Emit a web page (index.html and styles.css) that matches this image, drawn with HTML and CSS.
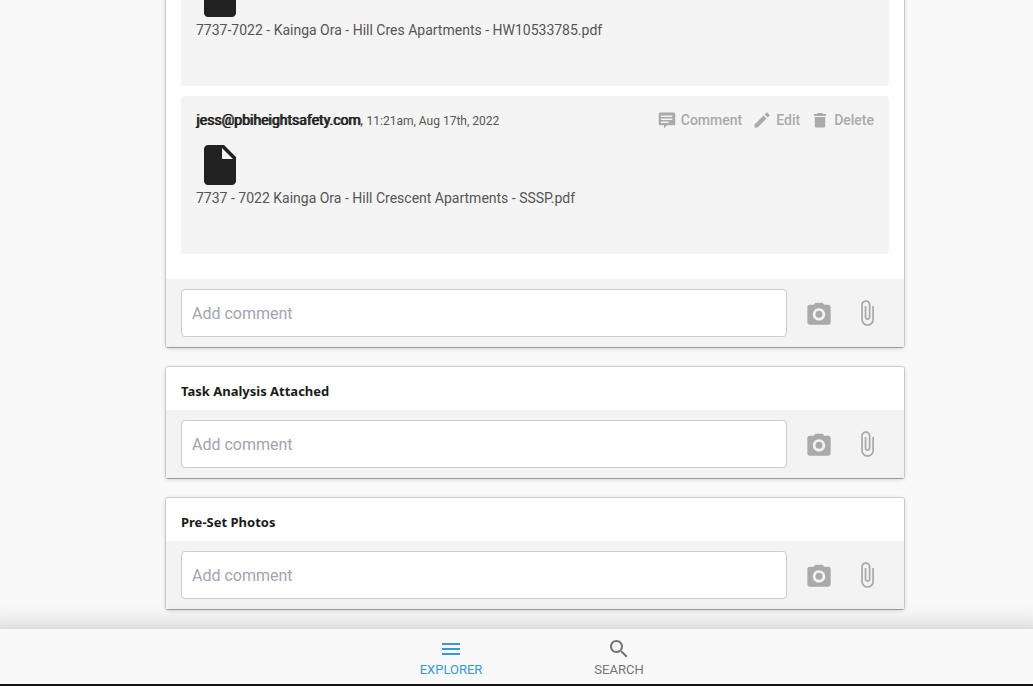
FILE: index.html
```html
<!DOCTYPE html>
<html lang="en">
<head>
<meta charset="utf-8">
<title>Explorer</title>
<link rel="stylesheet" href="styles.css">
</head>
<body>
<svg class="sprite" aria-hidden="true">
  <symbol id="file" viewBox="0 0 24 24"><path d="M6 2c-1.100 0-2 .9-2 2v16c0 1.100.9 2 2 2h12c1.100 0 2-.9 2-2V8l-6-6H6zm7 7V3.500L18.500 9H13z"/></symbol>
  <symbol id="comment" viewBox="0 0 24 24"><path d="M3 2h18a2 2 0 0 1 2 2v13a2 2 0 0 1-2 2H12l-4 4v-4H3a2 2 0 0 1-2-2V4a2 2 0 0 1 2-2zm1 4v2h15V6H4zm0 4v2h15v-2H4zm0 4v2h10v-2H4z"/></symbol>
  <symbol id="edit" viewBox="0 0 24 24"><path d="M2 18v4h4L18 10l-4-4L2 18zM21.700 6.300c.4-.4.4-1.100 0-1.500l-2.500-2.500c-.4-.4-1.100-.4-1.500 0L15.500 4.500l4 4 2.200-2.200z"/></symbol>
  <symbol id="trash" viewBox="0 0 24 24"><path d="M5 20c0 1.200.9 2 2 2h10c1.100 0 2-.8 2-2V8H5v12zM20 4h-4l-1-1.500H9L8 4H4v2.500h16V4z"/></symbol>
  <symbol id="camera" viewBox="0 0 24 24"><circle cx="12" cy="13" r="3"/><path d="M9 3.200L7.500 5H4c-1.100 0-2 .9-2 2v13c0 1.100.9 2 2 2h16c1.100 0 2-.9 2-2V7c0-1.100-.9-2-2-2h-3.500L15 3.200H9zm3 15.300c-3 0-5.300-2.400-5.300-5.300S9 7.900 12 7.900s5.300 2.400 5.300 5.300-2.300 5.300-5.300 5.300z"/></symbol>
  <symbol id="clip" viewBox="0 0 24 24"><path d="M16.500 6v11.500c0 2.210-1.790 4-4 4s-4-1.790-4-4V5c0-1.380 1.120-2.500 2.500-2.500s2.500 1.120 2.500 2.500v10.500c0 .55-.45 1-1 1s-1-.45-1-1V6H10v9.500c0 1.380 1.120 2.500 2.500 2.500s2.500-1.120 2.500-2.500V5c0-2.210-1.790-4-4-4S7 2.790 7 5v12.500c0 3.040 2.460 5.500 5.500 5.500s5.500-2.460 5.500-5.500V6h-1.500z"/></symbol>
  <symbol id="menu" viewBox="0 0 24 24"><path d="M3 18h18v-2H3v2zm0-5h18v-2H3v2zm0-7v2h18V6H3z"/></symbol>
  <symbol id="search" viewBox="0 0 24 24"><path d="M15.500 14h-.79l-.28-.27C15.410 12.590 16 11.110 16 9.500 16 5.910 13.090 3 9.500 3S3 5.910 3 9.500 5.910 16 9.500 16c1.610 0 3.090-.59 4.230-1.570l.27.28v.79l5 4.990L20.490 19l-4.990-5zm-6 0C7.010 14 5 11.990 5 9.500S7.010 5 9.500 5 14 7.010 14 9.500 11.990 14 9.500 14z"/></symbol>
</svg>

<main class="feed">
  <section class="card">
    <div class="comments">
      <article class="comment">
        <svg class="file-icon"><use href="#file"/></svg>
        <p class="file-name">7737-7022 - Kainga Ora - Hill Cres Apartments - HW10533785.pdf</p>
      </article>
      <article class="comment">
        <header class="comment-head">
          <p class="byline"><span class="author">jess@pbiheightsafety.com</span>, <time class="time">11:21am, Aug 17th, 2022</time></p>
          <div class="actions">
            <button class="action" type="button"><svg class="action-icon"><use href="#comment"/></svg>Comment</button>
            <button class="action" type="button"><svg class="action-icon"><use href="#edit"/></svg>Edit</button>
            <button class="action" type="button"><svg class="action-icon"><use href="#trash"/></svg>Delete</button>
          </div>
        </header>
        <svg class="file-icon"><use href="#file"/></svg>
        <p class="file-name">7737 - 7022 Kainga Ora - Hill Crescent Apartments - SSSP.pdf</p>
      </article>
    </div>
    <form class="add">
      <input class="add-input" type="text" placeholder="Add comment" aria-label="Add comment">
      <button class="add-button" type="button" aria-label="Add photo"><svg class="add-icon"><use href="#camera"/></svg></button>
      <button class="add-button" type="button" aria-label="Attach file"><svg class="add-icon"><use href="#clip"/></svg></button>
    </form>
  </section>

  <section class="card">
    <h2 class="card-title">Task Analysis Attached</h2>
    <form class="add">
      <input class="add-input" type="text" placeholder="Add comment" aria-label="Add comment">
      <button class="add-button" type="button" aria-label="Add photo"><svg class="add-icon"><use href="#camera"/></svg></button>
      <button class="add-button" type="button" aria-label="Attach file"><svg class="add-icon"><use href="#clip"/></svg></button>
    </form>
  </section>

  <section class="card">
    <h2 class="card-title">Pre-Set Photos</h2>
    <form class="add">
      <input class="add-input" type="text" placeholder="Add comment" aria-label="Add comment">
      <button class="add-button" type="button" aria-label="Add photo"><svg class="add-icon"><use href="#camera"/></svg></button>
      <button class="add-button" type="button" aria-label="Attach file"><svg class="add-icon"><use href="#clip"/></svg></button>
    </form>
  </section>
</main>

<nav class="tabs">
  <a class="tab tab-active" href="#explorer"><svg class="tab-icon"><use href="#menu"/></svg>EXPLORER</a>
  <a class="tab" href="#find"><svg class="tab-icon"><use href="#search"/></svg>SEARCH</a>
</nav>
</body>
</html>
```

FILE: styles.css
```css
* {
  box-sizing: border-box;
}

body {
  display: flex;
  flex-direction: column;
  height: 100vh;
  margin: 0;
  overflow: hidden;
  background: #f9f9f9;
  color: #555;
  font: 14px/18px Roboto, "Liberation Sans", sans-serif;
}

svg {
  display: block;
  fill: currentColor;
}

p,
h2 {
  margin: 0;
}

button {
  padding: 0;
  border: 0;
  background: none;
  color: #aaa;
  font: inherit;
  cursor: pointer;
}

.sprite {
  position: absolute;
  width: 0;
  height: 0;
}

.feed {
  display: flex;
  flex: 1;
  flex-direction: column;
  align-items: center;
  justify-content: flex-end;
  gap: 20px;
  min-height: 0;
  padding: 0 0 20px 37px;
  overflow: hidden;
}

.card {
  flex: none;
  width: 100%;
  max-width: 738px;
  border-radius: 2px;
  background: #fff;
  box-shadow: 0 1px 0 0 rgba(0, 0, 0, 0.2), 0 0 0 1px rgba(0, 0, 0, 0.12), 0 1px 5px rgba(0, 0, 0, 0.2);
}

.comments {
  display: flex;
  flex-direction: column;
  gap: 10px;
  padding: 15px 15px 25px;
}

.comment {
  padding: 15px 15px 47px;
  border-radius: 4px;
  background: #f4f4f4;
}

.comment-head {
  display: flex;
  justify-content: space-between;
  margin-bottom: 12px;
}

.author {
  color: #212121;
  text-shadow: 1px 0 #212121;
}

.time {
  font-size: 12px;
  line-height: 14px;
}

.actions {
  display: flex;
  gap: 11px;
}

.action {
  display: flex;
  align-items: center;
  gap: 5px;
  font-weight: 500;
}

.action-icon {
  width: 18px;
  height: 18px;
}

.file-icon {
  width: 48px;
  height: 48px;
  color: #212121;
}

.card-title {
  padding: 15px 15px 10px;
  color: #1a1a1a;
  font: bold 13px/18px "Noto Sans", sans-serif;
}

.add {
  display: flex;
  align-items: center;
  padding: 10px 13px 10px 15px;
  background: #f3f3f3;
}

.add-input {
  flex: 1;
  min-width: 0;
  height: 48px;
  margin-right: 8px;
  padding: 0 10px;
  border: 1px solid #ccc;
  border-radius: 4px;
  background: #fff;
  color: #333;
  font: 16px/24px Roboto, "Liberation Sans", sans-serif;
}

.add-input::placeholder {
  color: #a1a5b0;
  opacity: 1;
}

.add-button {
  display: grid;
  place-items: center;
  width: 48px;
  height: 48px;
}

.add-icon {
  width: 28px;
  height: 28px;
}

.tabs {
  display: flex;
  justify-content: center;
  padding-left: 37px;
  border-bottom: 2px solid #111;
  background: #f9f9f9;
  box-shadow: 0 20px 24px 20px rgba(0, 0, 0, 0.22);
}

.tab {
  display: flex;
  flex-direction: column;
  align-items: center;
  width: 168px;
  padding: 8px 0 5px;
  color: #757575;
  font-size: 13px;
  text-decoration: none;
}

.tab-active {
  color: #3498db;
}

.tab-icon {
  width: 24px;
  height: 24px;
}
```
